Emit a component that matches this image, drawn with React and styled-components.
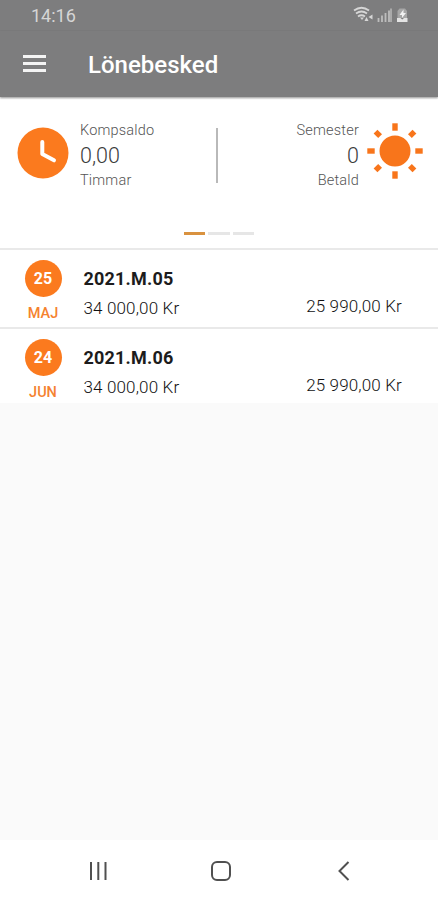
import React from "react";
import styled, { createGlobalStyle } from "styled-components";

const GlobalStyle = createGlobalStyle`
  * {
    box-sizing: border-box;
  }
  body {
    margin: 0;
    background-color: #fafafa;
    font-family: Roboto, "Liberation Sans", sans-serif;
  }
`;

const Screen = styled.div`
  display: flex;
  flex-direction: column;
  width: 100%;
  height: 900px;
  overflow: hidden;
`;

const StatusBar = styled.div`
  display: flex;
  justify-content: space-between;
  height: 31px;
  padding: 0 29px 0 31px;
  background-color: #7d7d7e;
`;
const Time = styled.span`
  font-size: 18px;
  line-height: 31px;
  color: #d6d6d6;
`;
const StatusIcons = styled.svg`
  width: 56px;
  height: 31px;
`;

const AppBar = styled.header`
  display: flex;
  align-items: center;
  height: 66px;
  padding: 1px 22px 0 23px;
  background-color: #7d7d7e;
  box-shadow: 0 1px 2px rgba(0, 0, 0, 0.4);
  z-index: 1;
`;
const MenuButton = styled.button`
  display: flex;
  flex-direction: column;
  gap: 4px;
  width: 23px;
  margin: -3px 42px 0 0;
  padding: 0;
  border: none;
  background: none;
`;
const MenuLine = styled.span`
  height: 3px;
  width: 100%;
  background-color: #f4f4f4;
`;
const Title = styled.h1`
  margin: 0;
  font-size: 24px;
  font-weight: 500;
  line-height: 30px;
  color: #fff;
`;

const Summary = styled.section`
  display: flex;
  flex-direction: column;
  align-items: center;
  height: 151px;
  padding-top: 20px;
  background-color: #fff;
  border-top: 2px solid #fafafa;
`;
const Balances = styled.div`
  display: flex;
  align-items: center;
  width: 100%;
  height: 73px;
  padding: 0 14px 0 17px;
`;
const Balance = styled.div`
  display: flex;
  flex: ${(props) => (props.$right ? "1" : "0 0 199px")};
  flex-direction: ${(props) => (props.$right ? "row-reverse" : "row")};
  align-items: center;
  gap: ${(props) => (props.$right ? 7 : 11)}px;
  text-align: ${(props) => (props.$right ? "right" : "left")};
`;
const BalanceLabel = styled.div`
  font-size: 14.5px;
  font-weight: 300;
  line-height: 25px;
  letter-spacing: 0.2px;
  color: #555;
`;
const BalanceValue = styled.div`
  font-size: 21.5px;
  font-weight: 300;
  line-height: 25px;
  color: #3c3c3c;
`;
const Divider = styled.div`
  width: 2px;
  height: 55px;
  background-color: #b9b9b9;
`;
const ClockIcon = styled.svg`
  width: 52px;
  height: 52px;
  margin-top: -5px;
`;
const SunIcon = styled.svg`
  width: 58px;
  height: 58px;
  margin-top: -9px;
`;

const Pager = styled.div`
  display: flex;
  gap: 3px;
  margin-top: 40px;
`;
const Page = styled.span`
  width: 21.5px;
  height: 3px;
  background-color: ${(props) => (props.$active ? "#d9923f" : "#e6e6e6")};
`;

const List = styled.main`
  flex: 1;
  background-color: #fafafa;
`;
const Row = styled.div`
  display: flex;
  height: ${(props) => (props.$last ? 76 : 79)}px;
  padding-right: 36px;
  background-color: #fff;
  border-top: 2px solid #e9e9e9;
`;
const DateColumn = styled.div`
  display: flex;
  flex-direction: column;
  align-items: center;
  width: 86px;
  padding-top: 10px;
`;
const Day = styled.div`
  width: 37px;
  height: 37px;
  border-radius: 50%;
  background-color: #fb7a1e;
  color: #fff;
  font-size: 16px;
  font-weight: 700;
  line-height: 37px;
  text-align: center;
`;
const Month = styled.div`
  margin-top: 7px;
  font-size: 14.5px;
  font-weight: 500;
  line-height: 20px;
  color: #f5822f;
`;
const Period = styled.div`
  flex: 1;
  margin-left: -2.5px;
  padding-top: 17px;
`;
const PeriodName = styled.div`
  font-size: 18px;
  font-weight: 700;
  line-height: 24px;
  letter-spacing: 0.2px;
  color: #1c1c1c;
`;
const Amount = styled.div`
  margin-top: ${(props) => (props.$net ? 44 : 5)}px;
  font-size: 17px;
  font-weight: 300;
  line-height: 24px;
  letter-spacing: 0.15px;
  color: #111;
`;

const NavigationBar = styled.nav`
  display: flex;
  justify-content: space-between;
  align-items: center;
  height: 60px;
  padding: 2px 82px 0 86px;
  background-color: #fff;
`;
const NavIcon = styled.svg`
  width: 24px;
  height: 24px;
  fill: none;
  stroke: #505050;
  stroke-width: 2;
`;

const payslips = [
  { id: 1, day: "25", month: "MAJ", name: "2021.M.05" },
  { id: 2, day: "24", month: "JUN", name: "2021.M.06" },
];

const Status = () => (
  <StatusIcons viewBox="0 0 56 31">
    <g fill="none" stroke="#d6d6d6" strokeWidth="1.8">
      <path d="M1 10.500Q8.500 5 16 10.500" />
      <path d="M3 13.500Q8.500 9.500 14 13.500" />
      <path d="M5 16.500Q8.500 14 12 16.500" />
    </g>
    <path d="M7 17.500h4l-2 2.500zM11.500 21l2-4 2 4zM15.500 17l4-2.500v5z" fill="#d6d6d6" />
    <path
      d="M25.500 22v-4M29 22v-6.500M32.500 22V13M36 22V10.500"
      stroke="#bdbdbd"
      strokeWidth="1.8"
    />
    <path d="M38 22V8.500" stroke="#bdbdbd" strokeWidth="1.400" />
    <path d="M44.500 11l2-2.500h5.500l2 2.500v7h-9.500z" fill="#a6a6a6" />
    <path d="M50.500 9.500l-4 5.500h2.500v3l4-5h-2.500z" fill="#f2f2f2" />
    <path d="M44 18h3.500l1.800 1.500 1.700-1.500h3.500v4H44z" fill="#e4e4e4" />
  </StatusIcons>
);

const Clock = () => (
  <ClockIcon viewBox="0 0 52 52">
    <circle cx="26" cy="26" r="25.500" fill="#fb7a1e" />
    <path
      d="M25.300 15v12l11.700 6.300"
      fill="none"
      stroke="#fff"
      strokeWidth="4"
      strokeLinecap="round"
      strokeLinejoin="round"
    />
  </ClockIcon>
);

const Sun = () => (
  <SunIcon viewBox="0 0 58 58" fill="#f8751b">
    <circle cx="29" cy="29" r="15.500" />
    {[0, 90, 180, 270].map((angle) => (
      <rect
        key={angle}
        x="26.300"
        y="1.300"
        width="5.400"
        height="7.400"
        transform={`rotate(${angle} 29 29)`}
      />
    ))}
    {[45, 135, 225, 315].map((angle) => (
      <rect
        key={angle}
        x="26.300"
        y="1.500"
        width="5.400"
        height="6.400"
        transform={`rotate(${angle} 29 29)`}
      />
    ))}
  </SunIcon>
);

const App = () => {
  return (
    <>
      <GlobalStyle />
      <Screen>
        <StatusBar>
          <Time>14:16</Time>
          <Status />
        </StatusBar>
        <AppBar>
          <MenuButton aria-label="Meny">
            <MenuLine />
            <MenuLine />
            <MenuLine />
          </MenuButton>
          <Title>Lönebesked</Title>
        </AppBar>

        <Summary>
          <Balances>
            <Balance>
              <Clock />
              <div>
                <BalanceLabel>Kompsaldo</BalanceLabel>
                <BalanceValue>0,00</BalanceValue>
                <BalanceLabel>Timmar</BalanceLabel>
              </div>
            </Balance>
            <Divider />
            <Balance $right>
              <Sun />
              <div>
                <BalanceLabel>Semester</BalanceLabel>
                <BalanceValue>0</BalanceValue>
                <BalanceLabel>Betald</BalanceLabel>
              </div>
            </Balance>
          </Balances>
          <Pager>
            <Page $active />
            <Page />
            <Page />
          </Pager>
        </Summary>

        <List>
          {payslips.map((item, index) => (
            <Row key={item.id} $last={index === payslips.length - 1}>
              <DateColumn>
                <Day>{item.day}</Day>
                <Month>{item.month}</Month>
              </DateColumn>
              <Period>
                <PeriodName>{item.name}</PeriodName>
                <Amount>34 000,00 Kr</Amount>
              </Period>
              <Amount $net>25 990,00 Kr</Amount>
            </Row>
          ))}
        </List>

        <NavigationBar>
          <NavIcon viewBox="0 0 24 24">
            <path d="M5 3v18M12.300 3v18M19.500 3v18" />
          </NavIcon>
          <NavIcon viewBox="0 0 24 24">
            <rect x="3" y="3" width="18" height="18" rx="5" />
          </NavIcon>
          <NavIcon viewBox="0 0 24 24">
            <path d="M16.500 3l-9 9 9 9" />
          </NavIcon>
        </NavigationBar>
      </Screen>
    </>
  );
};

export default App;
